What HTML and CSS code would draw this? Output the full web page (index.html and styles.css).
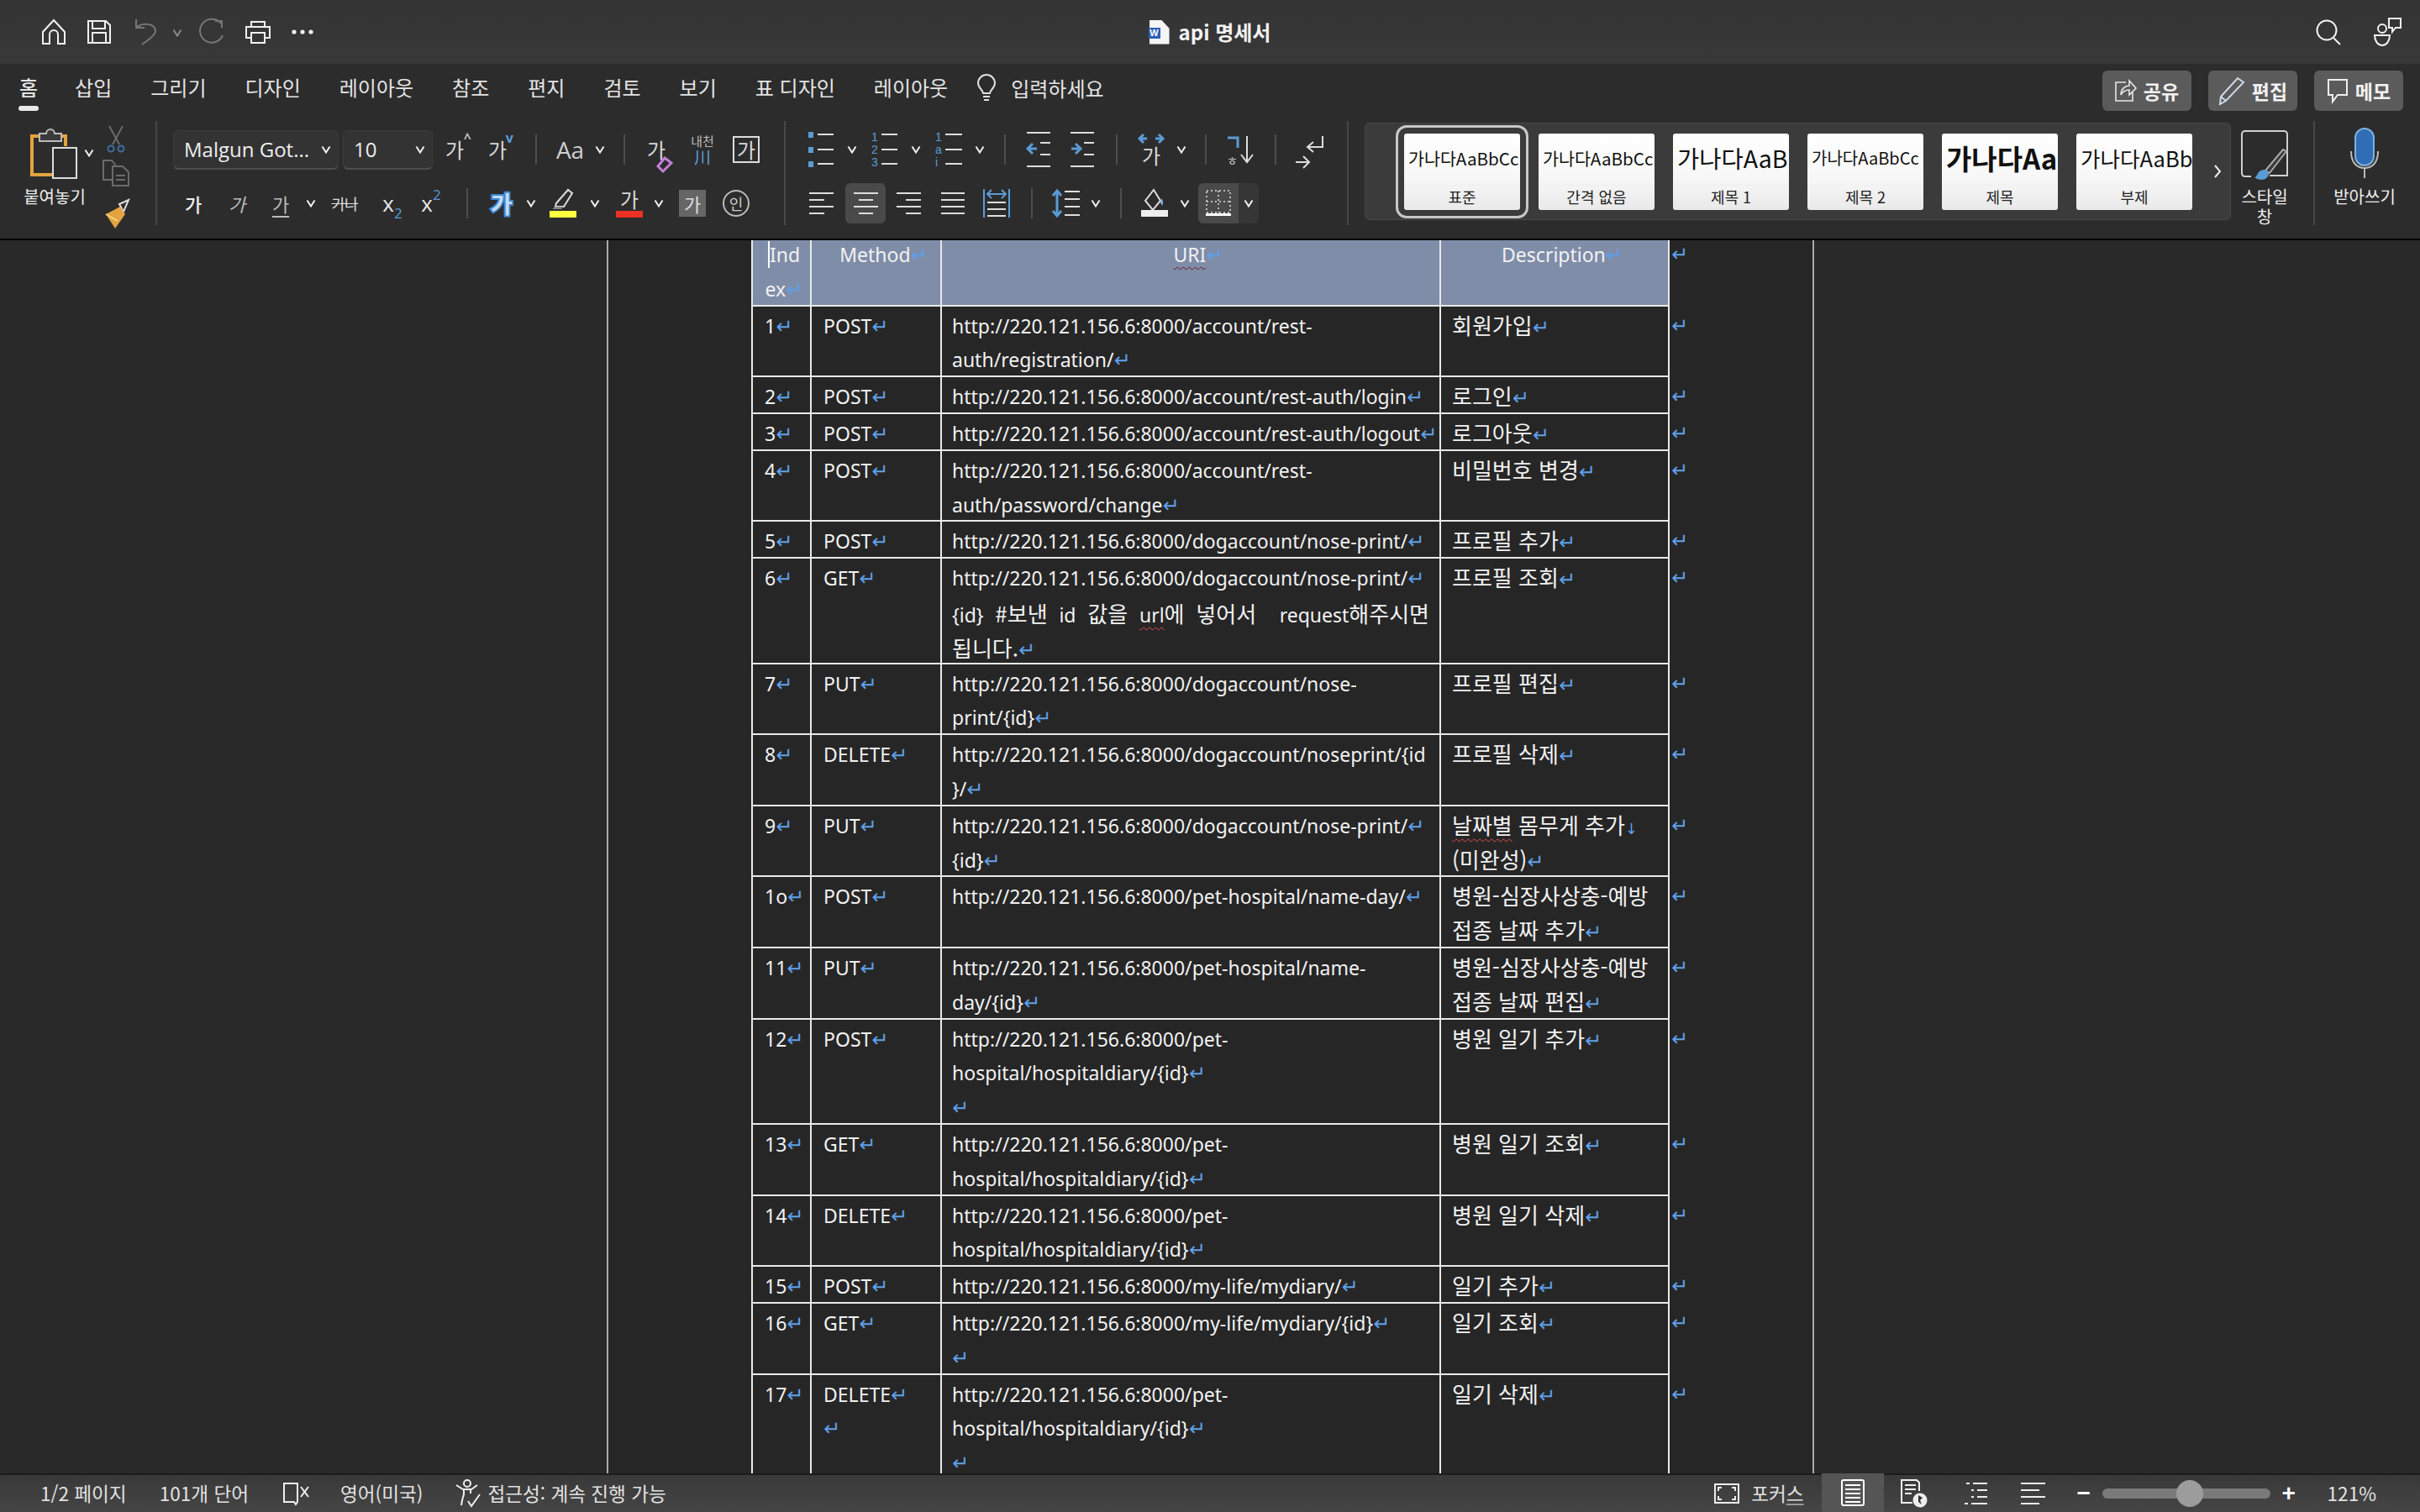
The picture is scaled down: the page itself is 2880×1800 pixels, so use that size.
FILE: index.html
```html
<!DOCTYPE html>
<html lang="ko">
<head>
<meta charset="utf-8">
<title>api 명세서</title>
<link rel="stylesheet" href="styles.css">
</head>
<body>
<svg class="sprite" aria-hidden="true">
  <symbol id="car" viewBox="0 0 12 10"><path d="M1.5 1.5 6 8.5l4.5-7" fill="none" stroke="#f0f0f0" stroke-width="2"/></symbol>
  <symbol id="list" viewBox="0 0 30 44"><g fill="#5b9bd5"><rect x="0" y="1" width="6" height="7"/><rect x="0" y="19" width="6" height="7"/><rect x="0" y="36" width="6" height="7"/></g><g stroke="#ddd" stroke-width="2"><path d="M11 4h19M11 22h19M11 39h19"/></g></symbol>
</svg>

<div class="app">
  <header class="titlebar">
    <div class="qat">
      <svg class="ml50" width="28" height="30" viewBox="0 0 28 30"><path d="M1 15 14 1l13 14v14h-8V18a5 5 0 0 0-10 0v11H1z" fill="none" stroke="#f2f2f2" stroke-width="2"/></svg>
      <svg class="ml26" width="28" height="28" viewBox="0 0 28 28"><path d="M1 1h21l5 5v21H1zM6 1v9h15V1M6 27V15h16v12" fill="none" stroke="#f2f2f2" stroke-width="2"/></svg>
      <svg class="ml28" width="27" height="32" viewBox="0 0 27 32"><path d="M2 1v10h10M2 11c8-7 23-5 23 4 0 6-11 12-16 16" fill="none" stroke="#767676" stroke-width="2"/></svg>
      <svg class="ml18 car" width="12" height="10"><use href="#car" opacity=".45"/></svg>
      <svg class="ml18" width="32" height="32" viewBox="0 0 32 32"><path d="M28 6A14 14 0 1 0 30 20M21 3h8v8" fill="none" stroke="#767676" stroke-width="2"/></svg>
      <svg class="ml24" width="32" height="28" viewBox="0 0 32 28"><path d="M8 8V2h16v6M8 21H2V8h28v13h-6M8 15h16v12H8z" fill="none" stroke="#f2f2f2" stroke-width="2"/></svg>
      <svg class="ml24" width="26" height="6" viewBox="0 0 26 6"><g fill="#f2f2f2"><circle cx="3" cy="3" r="2.6"/><circle cx="13" cy="3" r="2.6"/><circle cx="23" cy="3" r="2.6"/></g></svg>
    </div>
    <div class="doc-title">
      <span class="word-icon"><span class="word-w">W</span></span>
      <span>api 명세서</span>
    </div>
    <div class="title-right">
      <svg width="30" height="30" viewBox="0 0 30 30"><circle cx="13" cy="13" r="11.5" fill="none" stroke="#f2f2f2" stroke-width="2"/><path d="M21 22l8 8" stroke="#f2f2f2" stroke-width="2"/></svg>
      <svg class="ml38" width="34" height="34" viewBox="0 0 34 34"><g fill="none" stroke="#f2f2f2" stroke-width="2"><circle cx="11" cy="13" r="5"/><path d="M2 21h18c0 7-4 12-9 12s-9-5-9-12z"/><path d="M19 1h14v11h-6l-4 5v-5h-4z"/></g></svg>
    </div>
  </header>

  <section class="ribbon">
    <nav class="tabbar">
      <span class="tab tab-on">홈</span>
      <span class="tab">삽입</span>
      <span class="tab">그리기</span>
      <span class="tab">디자인</span>
      <span class="tab">레이아웃</span>
      <span class="tab">참조</span>
      <span class="tab">편지</span>
      <span class="tab">검토</span>
      <span class="tab">보기</span>
      <span class="tab">표 디자인</span>
      <span class="tab">레이아웃</span>
      <span class="tell">
        <svg width="22" height="36" viewBox="0 0 22 36"><path d="M7 22c0-4-6-6-6-12a10 10 0 0 1 20 0c0 6-6 8-6 12zM7 26h8M8 30h6" fill="none" stroke="#e0e0e0" stroke-width="2"/></svg>
        <span>입력하세요</span>
      </span>
      <span class="actions">
        <span class="act"><svg width="26" height="28" viewBox="0 0 26 28"><path d="M13 4H1v22h20V16M7 19c0-7 5-11 10-11V2l8 9-8 8v-6c-4 0-8 2-10 6z" fill="none" stroke="#e8e8e8" stroke-width="1.6"/></svg>공유</span>
        <span class="act"><svg width="32" height="34" viewBox="0 0 32 34"><path d="M3 24 23 2l7 5L9 29l-7 4zM3 24l6 5" fill="none" stroke="#cfd9ea" stroke-width="2"/></svg>편집</span>
        <span class="act"><svg width="26" height="30" viewBox="0 0 26 30"><path d="M2 2h22v18H13l-6 8v-8H2z" fill="none" stroke="#f0f0f0" stroke-width="2"/></svg>메모</span>
      </span>
    </nav>

    <div class="toolbar">
      <div class="grp grp-clip">
        <div class="paste">
          <svg width="56" height="62" viewBox="0 0 56 62"><path d="M12 10H1v46h24" fill="none" stroke="#e3a33f" stroke-width="4"/><path d="M30 10h11v12" fill="none" stroke="#e3a33f" stroke-width="4"/><path d="M10 16V7h8a5 5 0 0 1 10 0h8v9z" fill="#3a3a3a" stroke="#bbb" stroke-width="2"/><rect x="26" y="24" width="28" height="36" fill="#2c2c2c" stroke="#ddd" stroke-width="2"/></svg>
          <span class="lbl">붙여놓기</span>
        </div>
        <svg class="paste-car" width="12" height="10"><use href="#car"/></svg>
        <div class="side">
          <svg width="22" height="32" viewBox="0 0 22 32"><g fill="none" stroke="#6a6a6a" stroke-width="2"><path d="M3 0l12 22M19 0 7 22"/></g><g fill="none" stroke="#3f6ea5" stroke-width="2"><circle cx="5" cy="27" r="3.5"/><circle cx="17" cy="27" r="3.5"/></g></svg>
          <svg width="32" height="32" viewBox="0 0 32 32"><g fill="none" stroke="#6b6b6b" stroke-width="2"><path d="M12 24H1V1h10l4 5v3"/><path d="M12 8h12l7 7v16H12zM16 19h11M16 24h11"/></g></svg>
          <svg width="32" height="36" viewBox="0 0 32 36"><path d="M20 6 31 1l-6 14z" fill="none" stroke="#ddd" stroke-width="2"/><path d="M4 18 21 9l6 9-12 17z" fill="#e3a33f"/><path d="M4 18l14 8" stroke="#f6d28a" stroke-width="2"/></svg>
        </div>
      </div>
      <i class="vsep"></i>

      <div class="grp grp-font">
        <div class="row">
          <span class="combo w197 ml19"><span>Malgun Got...</span><svg width="12" height="10"><use href="#car"/></svg></span>
          <span class="combo w107 ml5"><span>10</span><svg width="12" height="10"><use href="#car"/></svg></span>
          <span class="ga w32 ml10">가<sup class="up">^</sup></span>
          <span class="ga w30 ml20">가<sup class="up blue">v</sup></span>
          <i class="hsep ml30"></i>
          <span class="aa w33 ml23">Aa</span>
          <svg class="ml13" width="12" height="10"><use href="#car"/></svg>
          <i class="hsep ml22"></i>
          <span class="ga w34 ml20 rel">가<svg class="over" width="20" height="20" viewBox="0 0 20 20"><path d="M10 2 18 8 8 18 2 12z" fill="none" stroke="#c57fd8" stroke-width="3"/></svg></span>
          <span class="ruby w32 ml22"><span>내천</span><b>川</b></span>
          <span class="ga boxed w32 ml20">가</span>
        </div>
        <div class="row">
          <span class="ga bold w32 ml27">가</span>
          <span class="ga ital w32 ml20">가</span>
          <span class="ga under w32 ml20">가</span>
          <svg class="ml14" width="12" height="10"><use href="#car"/></svg>
          <span class="ga strike w32 ml18">가나</span>
          <span class="sc w32 ml25">x<sub>2</sub></span>
          <span class="sc w32 ml14">x<sup>2</sup></span>
          <i class="hsep ml26"></i>
          <span class="ga glow w32 ml24">가</span>
          <svg class="ml13" width="12" height="10"><use href="#car"/></svg>
          <svg class="ml16" width="32" height="34" viewBox="0 0 32 34"><path d="M8 17 22 1l5 4-10 16H7z" fill="none" stroke="#ddd" stroke-width="2"/><path d="M7 21h9l-2 3H3z" fill="#888"/><rect y="26" width="32" height="8" fill="#ffff40"/></svg>
          <svg class="ml16" width="12" height="10"><use href="#car"/></svg>
          <span class="ga barred w32 ml19">가</span>
          <svg class="ml13" width="12" height="10"><use href="#car"/></svg>
          <span class="ga shaded w32 ml18">가</span>
          <span class="circ w32 ml20">인</span>
        </div>
      </div>
      <i class="vsep"></i>

      <div class="grp grp-para">
        <div class="row">
          <svg class="ml27" width="30" height="44"><use href="#list"/></svg>
          <svg class="ml16" width="12" height="10"><use href="#car"/></svg>
          <span class="numlist w31 ml17"><b>1<br>2<br>3</b></span>
          <svg class="ml16" width="12" height="10"><use href="#car"/></svg>
          <span class="numlist w32 ml17"><b>1<br>a<br>i</b></span>
          <svg class="ml15" width="12" height="10"><use href="#car"/></svg>
          <i class="hsep ml23"></i>
          <svg class="ml25" width="28" height="44" viewBox="0 0 28 44"><g stroke="#ddd" stroke-width="2" fill="none"><path d="M0 2h28M16 14h12M16 28h12M0 42h28"/></g><path d="M12 21H2m5-6-6 6 6 6" fill="none" stroke="#5b9bd5" stroke-width="3"/></svg>
          <svg class="ml24" width="28" height="44" viewBox="0 0 28 44"><g stroke="#ddd" stroke-width="2" fill="none"><path d="M0 2h28M16 14h12M16 28h12M0 42h28"/></g><path d="M1 21h10m-5-6 6 6-6 6" fill="none" stroke="#5b9bd5" stroke-width="3"/></svg>
          <i class="hsep ml26"></i>
          <span class="dir w32 ml24"><svg width="30" height="14" viewBox="0 0 30 14"><path d="M10 7H1m5-5L1 7l5 5M20 7h9m-5-5 5 5-5 5" fill="none" stroke="#5b9bd5" stroke-width="3"/></svg>가</span>
          <svg class="ml14" width="12" height="10"><use href="#car"/></svg>
          <i class="hsep ml22"></i>
          <span class="sort w30 ml24"><svg width="30" height="32" viewBox="0 0 30 32"><path d="M1 2h12v12" fill="none" stroke="#5b9bd5" stroke-width="3"/><path d="M24 0v30m-7-8 7 9 7-9" fill="none" stroke="#ddd" stroke-width="2"/></svg><b>ㅎ</b></span>
          <i class="hsep ml27"></i>
          <svg class="ml23" width="33" height="34" viewBox="0 0 33 34"><path d="M32 1v13H15m6-6-7 6 7 6M0 32h15m-6-7 7 7-7 7" fill="none" stroke="#ddd" stroke-width="2"/></svg>
        </div>
        <div class="row">
          <svg class="ml28" width="29" height="28" viewBox="0 0 29 28"><path d="M0 2h29M0 10h18M0 18h29M0 26h18" stroke="#ddd" stroke-width="2"/></svg>
          <span class="iconbox w48 ml14"><svg width="29" height="28" viewBox="0 0 29 28"><path d="M0 2h29M6 10h17M0 18h29M6 26h17" stroke="#ddd" stroke-width="2"/></svg></span>
          <svg class="ml13" width="29" height="28" viewBox="0 0 29 28"><path d="M0 2h29M11 10h18M0 18h29M11 26h18" stroke="#ddd" stroke-width="2"/></svg>
          <svg class="ml24" width="28" height="28" viewBox="0 0 28 28"><path d="M0 2h28M0 10h28M0 18h28M0 26h28" stroke="#ddd" stroke-width="2"/></svg>
          <svg class="ml22" width="32" height="34" viewBox="0 0 32 34"><path d="M1 0v34M31 0v34" stroke="#5b9bd5" stroke-width="2"/><path d="M6 6h20m-16-5-5 5 5 5M22 1l5 5-5 5" fill="none" stroke="#5b9bd5" stroke-width="2"/><path d="M5 16h22M5 24h22M5 32h22" stroke="#ddd" stroke-width="2"/></svg>
          <i class="hsep ml25"></i>
          <svg class="ml23" width="33" height="34" viewBox="0 0 33 34"><path d="M6 2v30M1 8l5-6 5 6M1 26l5 6 5-6" fill="none" stroke="#5b9bd5" stroke-width="3"/><path d="M15 3h18M15 12h18M15 21h18M15 31h18" stroke="#ddd" stroke-width="2"/></svg>
          <svg class="ml13" width="12" height="10"><use href="#car"/></svg>
          <i class="hsep ml23"></i>
          <svg class="ml23" width="32" height="32" viewBox="0 0 32 32"><path d="M15 0 5 13l9 11 9-11z" fill="none" stroke="#ddd" stroke-width="2"/><path d="M24 10c2 3 3 5 1 9l-2-4z" fill="#7fb0de"/><rect y="24" width="32" height="8" fill="#eee"/></svg>
          <svg class="ml14" width="12" height="10"><use href="#car"/></svg>
          <span class="splitbtn ml10">
            <span class="iconbox w48"><svg width="30" height="32" viewBox="0 0 30 32"><path d="M1 1h28v26H1zM15 1v26M1 14h28" fill="none" stroke="#bbb" stroke-width="2" stroke-dasharray="2 3"/><rect y="28" width="30" height="3" fill="#fff"/></svg></span>
            <span class="split-car"><svg width="12" height="10"><use href="#car"/></svg></span>
          </span>
        </div>
      </div>
      <i class="vsep"></i>

      <div class="grp grp-style">
        <div class="gallery">
          <div class="card card-on"><span class="pv pv1">가나다AaBbCc</span><span class="cl">표준</span></div>
          <div class="card"><span class="pv pv1">가나다AaBbCc</span><span class="cl">간격 없음</span></div>
          <div class="card"><span class="pv pv2">가나다AaBbCc</span><span class="cl">제목 1</span></div>
          <div class="card"><span class="pv pv3">가나다AaBbCc</span><span class="cl">제목 2</span></div>
          <div class="card"><span class="pv pv4">가나다AaBbCc</span><span class="cl">제목</span></div>
          <div class="card"><span class="pv pv5">가나다AaBbCc</span><span class="cl">부제</span></div>
          <svg class="more-st" width="10" height="18" viewBox="0 0 10 18"><path d="M2 2l6 7-6 7" fill="none" stroke="#eee" stroke-width="2"/></svg>
        </div>
        <div class="pane">
          <svg width="60" height="62" viewBox="0 0 60 62"><path d="M14 56H6a4 4 0 0 1-3-3V5a4 4 0 0 1 3-3h48a4 4 0 0 1 3 3v50H36" fill="none" stroke="#cfcfcf" stroke-width="2"/><path d="M56 26 36 52l-5-3 21-25z" fill="#3a3a3a" stroke="#aaa" stroke-width="2"/><path d="M18 57c4 0 3-10 13-9 4 1 5 5 3 8-3 5-11 5-16 1z" fill="#5b9bd5"/></svg>
          <span class="lbl">스타일<br>창</span>
        </div>
      </div>
      <i class="vsep"></i>

      <div class="grp grp-mic">
        <svg width="34" height="60" viewBox="0 0 34 60"><rect x="6" y="1" width="22" height="44" rx="11" fill="#2f6db5" stroke="#7fb0de" stroke-width="2"/><path d="M1 28c0 14 7 20 16 20s16-6 16-20" fill="none" stroke="#bbb" stroke-width="2"/><path d="M17 48v12" stroke="#bbb" stroke-width="2"/></svg>
        <span class="lbl">받아쓰기</span>
      </div>
    </div>
  </section>

  <main class="docarea">
    <div class="page">
      <table class="api">
        <colgroup><col class="c1"><col class="c2"><col class="c3"><col class="c4"><col class="c5"></colgroup>
        <thead>
          <tr>
            <th><p><span class="caret">Ind</span></p><p class="pm">ex</p></th>
            <th><p class="pm">Method</p></th>
            <th><p class="pm"><span class="sq-dark">URI</span></p></th>
            <th><p class="pm">Description</p></th>
            <td class="eor"><p class="pm"></p></td>
          </tr>
        </thead>
        <tbody>
          <tr><td><p class="pm">1</p></td><td><p class="pm">POST</p></td><td><p>http://220.121.156.6:8000/account/rest-</p><p class="pm">auth/registration/</p></td><td><p class="pm ko">회원가입</p></td><td class="eor"><p class="pm"></p></td></tr>
          <tr><td><p class="pm">2</p></td><td><p class="pm">POST</p></td><td><p class="pm">http://220.121.156.6:8000/account/rest-auth/login</p></td><td><p class="pm ko">로그인</p></td><td class="eor"><p class="pm"></p></td></tr>
          <tr><td><p class="pm">3</p></td><td><p class="pm">POST</p></td><td><p class="pm">http://220.121.156.6:8000/account/rest-auth/logout</p></td><td><p class="pm ko">로그아웃</p></td><td class="eor"><p class="pm"></p></td></tr>
          <tr><td><p class="pm">4</p></td><td><p class="pm">POST</p></td><td><p>http://220.121.156.6:8000/account/rest-</p><p class="pm">auth/password/change</p></td><td><p class="pm ko">비밀번호 변경</p></td><td class="eor"><p class="pm"></p></td></tr>
          <tr><td><p class="pm">5</p></td><td><p class="pm">POST</p></td><td><p class="pm">http://220.121.156.6:8000/dogaccount/nose-print/</p></td><td><p class="pm ko">프로필 추가</p></td><td class="eor"><p class="pm"></p></td></tr>
          <tr><td><p class="pm">6</p></td><td><p class="pm">GET</p></td><td><p class="pm">http://220.121.156.6:8000/dogaccount/nose-print/</p><p class="just">{id} <span class="ko">#보낸</span> id <span class="ko">값을</span> <span class="sq">url</span><span class="ko">에</span> <span class="ko">넣어서</span>&nbsp; request<span class="ko">해주시면</span></p><p class="pm"><span class="ko">됩니다.</span></p></td><td><p class="pm ko">프로필 조회</p></td><td class="eor"><p class="pm"></p></td></tr>
          <tr><td><p class="pm">7</p></td><td><p class="pm">PUT</p></td><td><p>http://220.121.156.6:8000/dogaccount/nose-</p><p class="pm">print/{id}</p></td><td><p class="pm ko">프로필 편집</p></td><td class="eor"><p class="pm"></p></td></tr>
          <tr><td><p class="pm">8</p></td><td><p class="pm">DELETE</p></td><td><p>http://220.121.156.6:8000/dogaccount/noseprint/{id</p><p class="pm">}/</p></td><td><p class="pm ko">프로필 삭제</p></td><td class="eor"><p class="pm"></p></td></tr>
          <tr><td><p class="pm">9</p></td><td><p class="pm">PUT</p></td><td><p class="pm">http://220.121.156.6:8000/dogaccount/nose-print/</p><p class="pm">{id}</p></td><td><p class="ko br"><span class="sq">날짜별</span> 몸무게 추가</p><p class="pm ko">(미완성)</p></td><td class="eor"><p class="pm"></p></td></tr>
          <tr><td><p class="pm">1o</p></td><td><p class="pm">POST</p></td><td><p class="pm">http://220.121.156.6:8000/pet-hospital/name-day/</p></td><td><p class="ko">병원-심장사상충-예방</p><p class="pm ko">접종 날짜 추가</p></td><td class="eor"><p class="pm"></p></td></tr>
          <tr><td><p class="pm">11</p></td><td><p class="pm">PUT</p></td><td><p>http://220.121.156.6:8000/pet-hospital/name-</p><p class="pm">day/{id}</p></td><td><p class="ko">병원-심장사상충-예방</p><p class="pm ko">접종 날짜 편집</p></td><td class="eor"><p class="pm"></p></td></tr>
          <tr><td><p class="pm">12</p></td><td><p class="pm">POST</p></td><td><p>http://220.121.156.6:8000/pet-</p><p class="pm">hospital/hospitaldiary/{id}</p><p class="pm"></p></td><td><p class="pm ko">병원 일기 추가</p></td><td class="eor"><p class="pm"></p></td></tr>
          <tr><td><p class="pm">13</p></td><td><p class="pm">GET</p></td><td><p>http://220.121.156.6:8000/pet-</p><p class="pm">hospital/hospitaldiary/{id}</p></td><td><p class="pm ko">병원 일기 조회</p></td><td class="eor"><p class="pm"></p></td></tr>
          <tr><td><p class="pm">14</p></td><td><p class="pm">DELETE</p></td><td><p>http://220.121.156.6:8000/pet-</p><p class="pm">hospital/hospitaldiary/{id}</p></td><td><p class="pm ko">병원 일기 삭제</p></td><td class="eor"><p class="pm"></p></td></tr>
          <tr><td><p class="pm">15</p></td><td><p class="pm">POST</p></td><td><p class="pm">http://220.121.156.6:8000/my-life/mydiary/</p></td><td><p class="pm ko">일기 추가</p></td><td class="eor"><p class="pm"></p></td></tr>
          <tr><td><p class="pm">16</p></td><td><p class="pm">GET</p></td><td><p class="pm">http://220.121.156.6:8000/my-life/mydiary/{id}</p><p class="pm"></p></td><td><p class="pm ko">일기 조회</p></td><td class="eor"><p class="pm"></p></td></tr>
          <tr><td><p class="pm">17</p></td><td><p class="pm">DELETE</p><p class="pm"></p></td><td><p>http://220.121.156.6:8000/pet-</p><p class="pm">hospital/hospitaldiary/{id}</p><p class="pm"></p></td><td><p class="pm ko">일기 삭제</p></td><td class="eor"><p class="pm"></p></td></tr>
        </tbody>
      </table>
    </div>
  </main>

  <footer class="statusbar">
    <span class="st ml48">1/2 페이지</span>
    <span class="st ml39">101개 단어</span>
    <svg class="ml41" width="32" height="28" viewBox="0 0 32 28"><path d="M13 2H1v22h12l2 3 2-3V2h-4" fill="none" stroke="#eee" stroke-width="2"/><path d="M21 6l9 12M30 6l-9 12" stroke="#eee" stroke-width="2"/></svg>
    <span class="st ml36">영어(미국)</span>
    <svg class="ml39" width="32" height="34" viewBox="0 0 32 34"><g fill="none" stroke="#eee" stroke-width="2"><circle cx="14" cy="5" r="4"/><path d="M1 7l8 5h10l7-5M10 12v6l-2 7-1 6M18 12v5"/><path d="M15 26l4 6 10-14"/></g></svg>
    <span class="st ml6">접근성: 계속 진행 가능</span>
    <span class="st-right">
      <svg width="30" height="24" viewBox="0 0 30 24"><rect x="1" y="1" width="28" height="22" fill="none" stroke="#eee" stroke-width="2"/><path d="M5 9V5h4M25 9V5h-4M5 15v4h4M25 15v4h-4" fill="none" stroke="#eee" stroke-width="2"/></svg>
      <span class="st ml14 focus">포커<u>스</u></span>
      <span class="view-on ml21"><svg width="28" height="32" viewBox="0 0 28 32"><rect x="1" y="1" width="26" height="30" rx="2" fill="none" stroke="#fff" stroke-width="2"/><path d="M5 7h18M5 12h18M5 17h18M5 22h18M5 27h18" stroke="#fff" stroke-width="2"/></svg></span>
      <svg class="ml20" width="32" height="34" viewBox="0 0 32 34"><path d="M14 28H1V1h18l3 3v10M5 7h13M5 12h13M5 17h8" fill="none" stroke="#eee" stroke-width="2"/><circle cx="23" cy="25" r="8.5" fill="#eee"/><path d="M21 19l5 3-3 3 2 5-4-3z" fill="#333"/></svg>
      <svg class="ml40" width="31" height="28" viewBox="0 0 31 28"><path d="M6 2h4M14 2h17M12 10h3M19 10h12M12 18h3M19 18h12M4 26h4M12 26h19" stroke="#eee" stroke-width="2"/></svg>
      <svg class="ml40" width="29" height="28" viewBox="0 0 29 28"><path d="M0 2h29M0 10h22M0 18h29M0 26h22" stroke="#eee" stroke-width="2"/></svg>
      <span class="zbtn ml38">−</span>
      <span class="slider ml14"><i class="thumb"></i></span>
      <span class="zbtn ml14">+</span>
      <span class="st ml38">121%</span>
    </span>
  </footer>
</div>
</body>
</html>
```

FILE: styles.css
```css
* { box-sizing: border-box; }
html, body { margin: 0; padding: 0; }
body {
  width: 2880px;
  height: 1800px;
  overflow: hidden;
  background: #292929;
  color: #e8e8e8;
  font-family: "Noto Sans CJK KR", "Noto Sans", sans-serif;
}
.sprite { display: none; }
svg { display: block; flex: none; overflow: visible; }
i { display: block; font-style: normal; }

.app { display: flex; flex-direction: column; height: 1800px; }

/* spacing helpers */
.ml2 { margin-left: 2px; } .ml5 { margin-left: 5px; } .ml6 { margin-left: 6px; }
.ml10 { margin-left: 10px; } .ml11 { margin-left: 11px; } .ml13 { margin-left: 13px; }
.ml14 { margin-left: 14px; } .ml15 { margin-left: 15px; } .ml16 { margin-left: 16px; }
.ml17 { margin-left: 17px; } .ml18 { margin-left: 18px; } .ml19 { margin-left: 19px; }
.ml20 { margin-left: 20px; } .ml21 { margin-left: 21px; } .ml22 { margin-left: 22px; }
.ml23 { margin-left: 23px; } .ml24 { margin-left: 24px; } .ml25 { margin-left: 25px; }
.ml26 { margin-left: 26px; } .ml27 { margin-left: 27px; } .ml28 { margin-left: 28px; }
.ml30 { margin-left: 30px; }
.ml36 { margin-left: 36px; } .ml38 { margin-left: 38px; } .ml39 { margin-left: 39px; }
.ml40 { margin-left: 40px; } .ml41 { margin-left: 41px; } .ml43 { margin-left: 43px; }
.ml48 { margin-left: 48px; } .ml50 { margin-left: 50px; }
.w30 { width: 30px; } .w31 { width: 31px; } .w32 { width: 32px; } .w33 { width: 33px; }
.w34 { width: 34px; } .w48 { width: 48px; } .w107 { width: 107px; } .w197 { width: 197px; }

/* title bar */
.titlebar {
  flex: none;
  height: 76px;
  display: grid;
  grid-template-columns: 1fr auto 1fr;
  align-items: center;
  background: linear-gradient(#343434, #383838);
}
.qat { display: flex; align-items: center; }
.qat .car { margin-top: 2px; }
.doc-title {
  display: flex;
  align-items: center;
  gap: 11px;
  font-size: 24px;
  font-weight: 700;
  color: #f2f2f2;
  line-height: 30px;
}
.word-icon {
  position: relative;
  display: block;
  width: 24px;
  height: 29px;
  background: #f5f5f5;
  clip-path: polygon(0 0, 60% 0, 100% 35%, 100% 100%, 0 100%, -20% 100%, -20% 30%, 0 30%);
}
.word-w {
  position: absolute;
  left: -1px;
  top: 9px;
  width: 14px;
  height: 13px;
  background: #2d5fb8;
  color: #fff;
  font: 700 11px/13px "Liberation Sans", sans-serif;
  text-align: center;
}
.title-right { display: flex; align-items: center; justify-content: flex-end; padding-right: 22px; }

/* ribbon */
.ribbon { flex: none; height: 210px; background: #2c2c2c; border-bottom: 2px solid #000; display: flex; flex-direction: column; }
.tabbar { flex: none; height: 68px; display: flex; align-items: center; padding-left: 23px; position: relative; }
.tab { position: relative; font-size: 24px; line-height: 32px; color: #e4e4e4; margin-right: 46px; white-space: nowrap; margin-top: -12px; }
.tab-on { font-weight: 500; margin-right: 44px; }
.tab-on::after { content: ""; position: absolute; left: -1px; right: -1px; top: 38px; height: 6px; border-radius: 3px; background: #e8e8e8; }
.tell { display: flex; align-items: center; gap: 18px; font-size: 24px; margin-top: -12px; margin-left: -11px; color: #e4e4e4; }
.tell svg { margin-top: 5px; }
.actions { position: absolute; right: 20px; top: 8px; display: flex; gap: 20px; }
.act {
  width: 106px;
  height: 48px;
  border-radius: 6px;
  background: #5b5b5b;
  display: flex;
  align-items: center;
  justify-content: center;
  gap: 8px;
  font-size: 23px;
  font-weight: 700;
  color: #f2f2f2;
}

.toolbar { flex: none; height: 124px; display: flex; align-items: stretch; }
.vsep { flex: none; width: 2px; background: #474747; }
.grp { flex: none; }
.grp-clip { width: 185px; display: flex; position: relative; padding-left: 30px; }
.paste { width: 70px; display: flex; flex-direction: column; align-items: center; padding-top: 8px; gap: 8px; }
.paste-car { margin-top: 33px; }
.side { margin-left: 9px; display: flex; flex-direction: column; align-items: center; gap: 8px; padding-top: 6px; width: 34px; }
.side svg:last-child { margin-top: 7px; }
.lbl { font-size: 20px; line-height: 24px; color: #eee; white-space: nowrap; text-align: center; }
.grp-font { width: 746px; padding-top: 2px; }
.grp-para { width: 668px; padding-top: 2px; }
.row { height: 64px; display: flex; align-items: center; flex: none; }
.hsep { flex: none; width: 2px; height: 36px; background: #4d4d4d; }

.combo {
  flex: none;
  height: 47px;
  display: flex;
  align-items: center;
  justify-content: space-between;
  padding: 0 8px 0 12px;
  background: #333;
  border: 1px solid #3c3c3c;
  border-bottom: 2px solid #4d4d4d;
  border-radius: 6px;
  font-family: "Open Sans", sans-serif;
  font-size: 24px;
  color: #eee;
}
.ga, .aa, .sc, .circ, .ruby, .numlist, .dir, .sort {
  flex: none;
  height: 40px;
  display: flex;
  align-items: center;
  justify-content: center;
  position: relative;
  font-size: 24px;
  line-height: 32px;
  color: #d8d8d8;
}
.ga sup { position: absolute; top: -2px; right: -4px; font: 700 16px/16px "Noto Sans", sans-serif; color: #bbb; }
.ga sup.blue { color: #5b9bd5; }
.over { position: absolute; right: -3px; bottom: -8px; }
.aa { font-family: "Open Sans", sans-serif; font-size: 28px; color: #cfcfcf; }
.ruby { flex-direction: column; font-size: 15px; line-height: 18px; color: #bbb; }
.ruby b { font-weight: 400; color: #5b9bd5; font-size: 20px; line-height: 20px; }
.boxed { height: 32px; border: 2px solid #ddd; font-size: 24px; }
.bold { font-weight: 500; color: #eee; font-size: 22px; }
.ital { font-style: italic; color: #bbb; font-size: 22px; }
.under { text-decoration: underline; text-underline-offset: 5px; font-size: 22px; color: #bbb; }
.strike { font-size: 18px; letter-spacing: -1px; text-decoration: line-through; color: #ddd; }
.sc { font-family: "Open Sans", sans-serif; font-size: 26px; color: #e8e8e8; }
.sc sub, .sc sup { font-size: 17px; color: #5b9bd5; line-height: 0; }
.sc sub { align-self: flex-end; margin-bottom: 8px; }
.sc sup { align-self: flex-start; margin-top: 10px; }
.glow { font-weight: 700; color: #c3dcf5; -webkit-text-stroke: 4px #3f86d0; paint-order: stroke fill; font-size: 28px; }
.barred { height: 34px; align-items: flex-start; border-bottom: 8px solid #ee3124; line-height: 24px; font-size: 24px; }
.shaded { background: #666; height: 32px; font-size: 22px; color: #ddd; }
.circ { height: 32px; border: 2px solid #bbb; border-radius: 50%; font-size: 18px; color: #ccc; }
.numlist { height: 44px; justify-content: flex-start; font-size: 14px; line-height: 15px; background: linear-gradient(#ddd, #ddd) 12px 3px / 20px 2px no-repeat, linear-gradient(#ddd, #ddd) 12px 21px / 20px 2px no-repeat, linear-gradient(#ddd, #ddd) 12px 38px / 20px 2px no-repeat; }
.numlist b { font-weight: 400; color: #5b9bd5; font-family: "Liberation Sans", sans-serif; }
.dir { flex-direction: column; height: 46px; font-size: 24px; line-height: 26px; }
.sort { height: 46px; }
.sort b { position: absolute; left: 0; bottom: 2px; font-size: 14px; line-height: 16px; font-weight: 400; color: #ccc; }
.iconbox { flex: none; height: 48px; display: flex; align-items: center; justify-content: center; background: #4a4a4a; border-radius: 6px; }
.splitbtn { flex: none; display: flex; height: 48px; border-radius: 6px; overflow: hidden; background: #363636; }
.splitbtn .iconbox { border-radius: 0; }
.split-car { width: 24px; display: flex; align-items: center; justify-content: center; }

/* gallery */
.grp-style { width: 1148px; display: flex; align-items: flex-start; }
.gallery {
  margin: 2px 0 0 19px;
  width: 1031px;
  height: 116px;
  background: #3b3b3b;
  border: 1px solid #484848;
  border-radius: 6px;
  display: flex;
  align-items: center;
  gap: 22px;
  padding-left: 46px;
  position: relative;
}
.card {
  flex: none;
  width: 138px;
  height: 91px;
  border-radius: 3px;
  background: linear-gradient(#fff, #f7f7f7 60%, #e9e9e9);
  display: flex;
  flex-direction: column;
  overflow: hidden;
  color: #111;
}
.card-on { outline: 3px solid #c8c8c8; outline-offset: 7px; border-radius: 3px; }
.pv { height: 61px; line-height: 58px; white-space: nowrap; overflow: hidden; padding-left: 5px; flex: none; }
.pv1 { font-size: 20.6px; }
.pv2 { font-size: 28.5px; }
.pv3 { font-size: 20px; }
.pv4 { font-size: 33px; font-weight: 700; }
.pv5 { font-size: 25.5px; }
.cl { flex: 1; font-size: 18px; line-height: 27px; text-align: center; color: #222; border-top: 1px solid #eee; }
.more-st { margin-left: 3px; }
.pane { width: 80px; display: flex; flex-direction: column; align-items: center; padding-top: 10px; gap: 6px; }
.pane .lbl { line-height: 24px; }
.grp-mic { flex: 1; display: flex; flex-direction: column; align-items: center; padding-top: 8px; gap: 10px; padding-right: 7px; }

/* document */
.docarea { flex: 1; min-height: 0; overflow: hidden; background: #292929; }
.page {
  width: 1437px;
  height: 100%;
  margin-left: 722px;
  border-left: 2px solid #aaa;
  border-right: 2px solid #aaa;
  background: #262626;
  padding-left: 170px;
  overflow: hidden;
}
.api {
  border-collapse: collapse;
  table-layout: fixed;
  width: 1131px;
  margin-top: -8px;
  font-family: "Noto Sans", "Noto Sans CJK KR", sans-serif;
  font-size: 23px;
  line-height: 45px;
  color: #f2f2f2;
}
.c1 { width: 70px; } .c2 { width: 155px; } .c3 { width: 594px; } .c4 { width: 272px; } .c5 { width: 40px; }
.api th, .api td { border: 2px solid #e9e9e9; padding: 1px 0 0 14px; vertical-align: top; text-align: left; font-weight: 400; white-space: nowrap; }
.api td:nth-child(3) { padding-left: 12px; }
.api td:nth-child(4) { padding-left: 13px; }
.api th { background: #7f8da8; text-align: center; padding-left: 18px; }
.api th:first-child { padding-left: 6px; }
.api td.eor { border: 0; padding-left: 2px; }
.api p { margin: 0; height: 40.8px; }
.api p.ko { line-height: 41px; }
.pm::after { content: "↵"; font-family: "DejaVu Sans", sans-serif; font-size: 24px; line-height: 0; color: #5f9fe6; }
.br::after { content: "↓"; font-family: "DejaVu Sans", sans-serif; font-size: 18px; line-height: 0; color: #5f9fe6; }
.ko { font-family: "Noto Sans CJK KR", sans-serif; font-size: 26px; }
.just { text-align: justify; text-align-last: justify; width: 568px; white-space: normal; }
.sq { text-decoration: underline wavy #e0504c 1px; text-underline-offset: 5px; }
.sq-dark { text-decoration: underline wavy #6e1420 1px; text-underline-offset: 5px; }
.caret { border-left: 2px solid #fff; }

/* status bar */
.statusbar {
  flex: none;
  height: 46px;
  display: flex;
  align-items: center;
  background: linear-gradient(#393939, #454545);
  border-top: 2px solid #1c1c1c;
}
.st { font-size: 22.6px; line-height: 30px; color: #e2e2e2; white-space: nowrap; }
.st-right { margin-left: auto; display: flex; align-items: center; height: 100%; padding-right: 52px; }
.focus u { text-decoration-color: #999; text-underline-offset: 3px; }
.view-on { width: 74px; height: 46px; margin-top: -2px; background: #555; display: flex; align-items: center; justify-content: center; }
.zbtn { width: 16px; font: 700 28px/30px "Liberation Sans", sans-serif; color: #fff; text-align: center; }
.slider { position: relative; width: 200px; height: 12px; border-radius: 6px; background: #7a7a7a; }
.thumb { position: absolute; left: 88px; top: -10px; width: 32px; height: 32px; border-radius: 50%; background: #9c9c9c; }
```
